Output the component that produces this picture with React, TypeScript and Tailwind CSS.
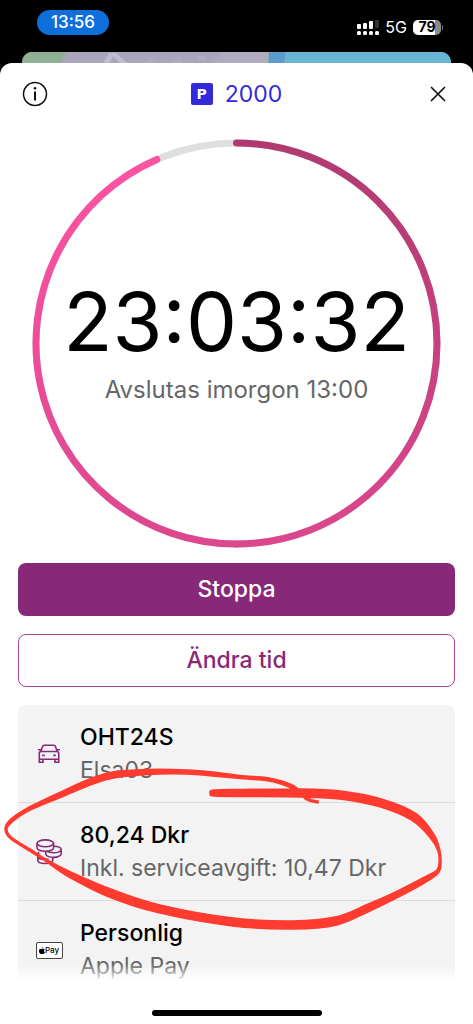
import type { ReactNode } from "react";

type Row = {
  id: string;
  title: string;
  subtitle: string;
  icon: ReactNode;
};

type InkPoint = [x: number, y: number, width: number];

const RING_RADIUS = 201;
const RING_PROGRESS = 0.935;

const INK: InkPoint[] = [
  [318, 97, 2],
  [307, 94, 2],
  [296, 84, 3],
  [283, 78, 3],
  [266, 74, 3],
  [240, 72, 3],
  [213, 69, 4],
  [187, 67, 4],
  [147, 67, 5],
  [113, 70, 6],
  [90, 77, 6],
  [60, 90, 5],
  [27, 105, 3],
  [11, 116, 3],
  [6, 124, 2],
  [11, 133, 2],
  [33, 147, 2],
  [47, 156, 2],
  [67, 168, 5],
  [110, 188, 8],
  [160, 204, 8],
  [233, 217, 8],
  [293, 220, 8],
  [336, 216, 8],
  [368, 203, 7],
  [400, 188, 6],
  [428, 173, 5],
  [438, 166, 3],
  [440, 158, 2],
  [439, 146, 2],
  [432, 131, 5],
  [414, 112, 8],
  [381, 98, 8],
  [340, 90, 8],
  [300, 88, 8],
  [240, 88, 7],
  [214, 88, 6],
  [210, 88, 3],
];

// Catmull-Rom through the points, written as cubic segments
function smooth(pts: number[][]) {
  return pts
    .slice(0, -1)
    .map((p1, i) => {
      const p0 = pts[i - 1] ?? p1;
      const p2 = pts[i + 1];
      const p3 = pts[i + 2] ?? p2;
      const c1 = [p1[0] + (p2[0] - p0[0]) / 6, p1[1] + (p2[1] - p0[1]) / 6];
      const c2 = [p2[0] - (p3[0] - p1[0]) / 6, p2[1] - (p3[1] - p1[1]) / 6];
      return `C${c1.join(" ")} ${c2.join(" ")} ${p2[0]} ${p2[1]}`;
    })
    .join("");
}

function inkPath(points: InkPoint[]) {
  const side = (dir: number) =>
    points.map(([x, y, w], i) => {
      const a = points[Math.max(i - 1, 0)];
      const b = points[Math.min(i + 1, points.length - 1)];
      const len = Math.hypot(b[0] - a[0], b[1] - a[1]);
      return [
        x + (dir * w * (a[1] - b[1])) / len / 2,
        y + (dir * w * (b[0] - a[0])) / len / 2,
      ];
    });
  const left = side(1);
  const right = side(-1).reverse();
  return `M${left[0].join(" ")}${smooth(left)}L${right[0].join(" ")}${smooth(right)}Z`;
}

function ringPoint(turn: number) {
  const a = turn * Math.PI * 2 - Math.PI / 2;
  return `${205 + RING_RADIUS * Math.cos(a)} ${205 + RING_RADIUS * Math.sin(a)}`;
}

function SignalIcon() {
  return (
    <svg width="22" height="15" viewBox="0 0 22 15" fill="#fff" aria-hidden="true">
      <rect x="0" y="4" width="4" height="5" rx="1" />
      <rect x="6" y="3" width="4" height="6" rx="1" />
      <rect x="12" y="1" width="4" height="8" rx="1" />
      <rect x="18" y="0" width="4" height="8" rx="1" fill="#333" />
      <rect x="0" y="11" width="4" height="4" rx="1.5" />
      <rect x="6" y="11" width="4" height="4" rx="1.5" />
      <rect x="12" y="11" width="4" height="4" rx="1.5" />
      <rect x="18" y="11" width="4" height="4" rx="1.5" />
    </svg>
  );
}

function CarIcon() {
  return (
    <svg width="22" height="20" viewBox="0 0 22 20" fill="none" stroke="#882978" strokeWidth="1.6" aria-hidden="true">
      <path d="M2.600 8 4.600 2.200Q4.900 1.200 6 1.200H16q1.100 0 1.400 1L19.400 8" />
      <path d="M1.300 18.200V9.300q0-1.800 1.800-1.800H18.900q1.800 0 1.800 1.800v8.900H17v-3H5v3ZM1.300 15.200H5M17 15.200h3.700M0 5.700h3M19 5.700h3" />
      <path d="M4.200 11.300h2.600M15.200 11.300h2.600" strokeWidth="1.800" />
    </svg>
  );
}

function CoinsIcon() {
  return (
    <svg width="26" height="26" viewBox="0 0 26 26" fill="none" stroke="#882978" strokeWidth="1.6" aria-hidden="true">
      <path d="M1.800 14.500v6.700c0 1.900 3.300 3.300 7.500 3.300s7.500-1.400 7.500-3.300v-2.500M1.800 17.500c0 1.600 3 2.900 7.200 2.900 1.300 0 2.600-.1 3.600-.4M1.800 15.500c0-.9.600-1.700 1.600-2.300" />
      <path d="M18 7.200c4 0 7.200 1.400 7.200 3.300s-3.400 3.300-7.600 3.300c-2.800 0-5.500-.6-7-1.600M25.200 10.500v4.300c0 1.900-3.400 3.600-7.700 3.600s-7.700-1.600-7.700-3.500v-2.500" />
      <ellipse cx="9.300" cy="4.300" rx="8.300" ry="3.400" />
      <path d="M1 4.300v4.400c0 2 3.700 3.600 8.300 3.600s8.300-1.600 8.300-3.600V4.300" />
    </svg>
  );
}

function ApplePayIcon() {
  return (
    <span className="flex h-[17px] w-[27px] items-center justify-center rounded-xs border border-[#444] bg-white text-[8px] leading-none font-medium text-black">
      <svg width="6" height="7" viewBox="0 0 12 14" aria-hidden="true">
        <path d="M8.300 0c.1 1.500-1 2.900-2.500 3C5.600 1.500 7 .2 8.300 0ZM6 4c.7 0 1.400-.7 2.700-.7 1.200 0 2.200.6 2.800 1.500-2.300 1.400-1.900 4.500.5 5.400C11.300 12 10.100 14 8.700 14c-1 0-1.400-.6-2.600-.6S4.500 14 3.600 14C1.700 14 0 10.700 0 8c0-3 1.800-4.600 3.600-4.600C4.700 3.400 5.500 4 6 4Z" />
      </svg>
      Pay
    </span>
  );
}

const ROWS: Row[] = [
  { id: "car", title: "OHT24S", subtitle: "Elsa03", icon: <CarIcon /> },
  { id: "price", title: "80,24 Dkr", subtitle: "Inkl. serviceavgift: 10,47 Dkr", icon: <CoinsIcon /> },
  { id: "payment", title: "Personlig", subtitle: "Apple Pay", icon: <ApplePayIcon /> },
];

function StatusBar() {
  return (
    <div className="flex h-[52px] items-start justify-between pt-[10px] pr-[30px] pl-[37px] text-white">
      <div className="flex h-[25px] w-[72px] items-center justify-center rounded-full bg-[#0f6fda] text-[17px] font-medium">
        13:56
      </div>
      <div className="flex h-[34px] items-center gap-[6px]">
        <SignalIcon />
        <span className="text-base">5G</span>
        <div className="flex items-center gap-px">
          <span className="flex h-[15px] w-7 items-center justify-center rounded-[5px] bg-linear-to-r from-white from-79% to-[#8a8a8a] to-79% text-sm font-bold text-black">
            79
          </span>
          <span className="h-[5px] w-px rounded-r-full bg-[#777]" />
        </div>
      </div>
    </div>
  );
}

function MapStrip() {
  return (
    <svg className="mx-auto block h-[30px] w-[calc(100%-44px)] rounded-t-[10px]" viewBox="0 0 429 30" preserveAspectRatio="none" aria-hidden="true">
      <rect width="429" height="30" fill="#aaa5bd" />
      <path d="M0 0H46Q41 4 38 12V30H0Z" fill="#8eb193" />
      <path d="M81 12 87 1H94L106 12H99L91 4 87 12Z" fill="#c0bcd6" />
      <path d="M122 12 128 5 134 12ZM146 12 158 6 162 12ZM176 4H184V9H176Z" fill="#b0abc2" />
      <path d="M200 0H257L256 12H190Z" fill="#b0abc0" />
      <path d="M245 0h2l-1 12h-2Z" fill="#a9b5a5" />
      <path d="M247 0H264L262 12H246Z" fill="#5c9ccd" />
      <path d="M264 0H429V30H262Z" fill="#67b5d3" />
    </svg>
  );
}

// The stroke darkens down the right half and brightens up the left half
function TimerRing() {
  const r = `${RING_RADIUS} ${RING_RADIUS}`;
  return (
    <svg className="block w-full" viewBox="0 0 410 410" fill="none" strokeWidth="7" strokeLinecap="round" aria-hidden="true">
      <defs>
        <linearGradient id="ring-right" gradientUnits="userSpaceOnUse" x1="0" y1="0" x2="0" y2="410">
          <stop offset="0" stopColor="#b03a70" />
          <stop offset="1" stopColor="#dc478e" />
        </linearGradient>
        <linearGradient id="ring-left" gradientUnits="userSpaceOnUse" x1="0" y1="410" x2="0" y2="0">
          <stop offset="0" stopColor="#dc478e" />
          <stop offset="1" stopColor="#ff54a4" />
        </linearGradient>
      </defs>
      <circle cx="205" cy="205" r={RING_RADIUS} stroke="#dfdfdf" />
      <path d={`M${ringPoint(0)}A${r} 0 0 1 ${ringPoint(0.5)}`} stroke="url(#ring-right)" />
      <path d={`M${ringPoint(0.5)}A${r} 0 0 1 ${ringPoint(RING_PROGRESS)}`} stroke="url(#ring-left)" />
    </svg>
  );
}

export default function App() {
  return (
    <div className="flex min-h-screen flex-col overflow-hidden bg-black font-['Inter',sans-serif]">
      <StatusBar />
      <MapStrip />

      <main className="relative -mt-[19px] flex flex-1 flex-col rounded-t-[12px] bg-white">
        <header className="flex h-[62px] items-center justify-between px-[22px]">
          <button type="button" aria-label="Information">
            <svg width="26" height="26" viewBox="0 0 26 26" fill="none" stroke="#111" strokeWidth="1.500">
              <circle cx="13" cy="13" r="11.500" />
              <path d="M13 10.500V19.500" strokeWidth="2" />
              <circle cx="13" cy="7.200" r="1.300" fill="#111" stroke="none" />
            </svg>
          </button>
          <h1 className="flex items-center gap-3 text-[23px] text-[#322bdc]">
            <span className="flex size-[22px] items-center justify-center rounded-xs bg-[#322bdc] font-['DejaVu_Sans',sans-serif] text-sm font-bold text-white">
              P
            </span>
            2000
          </h1>
          <button type="button" aria-label="Stäng" className="flex size-[26px] items-center justify-center">
            <svg width="16" height="16" viewBox="0 0 16 16" stroke="#111" strokeWidth="1.700" strokeLinecap="round">
              <path d="M1.500 1.500 14.500 14.500M14.500 1.500 1.500 14.500" />
            </svg>
          </button>
        </header>

        <section className="mx-8 mt-[14px] grid">
          <div className="col-start-1 row-start-1">
            <TimerRing />
          </div>
          <div className="col-start-1 row-start-1 flex flex-col items-center justify-center pb-2 text-center">
            <div className="text-[81px] leading-[96px] text-black">23:03:32</div>
            <p className="mt-1 text-2xl text-[#666]">Avslutas imorgon 13:00</p>
          </div>
        </section>

        <div className="mt-[15px] flex flex-col gap-[18px] px-[18px] text-[23px] font-medium">
          <button type="button" className="h-[53px] rounded-lg bg-[#872878] text-white">
            Stoppa
          </button>
          <button type="button" className="h-[53px] rounded-lg border border-[#a7459b] text-[#872878]">
            Ändra tid
          </button>
        </div>

        <section className="relative mt-[18px] px-[18px]">
          <ul className="h-[283px] overflow-hidden rounded-t-lg bg-[#f3f3f3]">
            {ROWS.map((row) => (
              <li key={row.id} className="flex h-[98px] items-center border-b border-[#dcdcdc] last:border-b-0">
                <span className="flex w-[62px] shrink-0 justify-center">{row.icon}</span>
                <div className="text-[23px] leading-[33px]">
                  <p className="font-medium text-black">{row.title}</p>
                  <p className="text-[#666]">{row.subtitle}</p>
                </div>
              </li>
            ))}
          </ul>
          <div className="absolute inset-x-0 bottom-0 h-6 bg-linear-to-b from-transparent to-white to-75%" />
          <svg className="pointer-events-none absolute top-0 left-0 w-full" viewBox="0 0 473 240" aria-hidden="true">
            <path d={inkPath(INK)} fill="#ff3b30" stroke="#ff3b30" strokeWidth="1.500" strokeLinejoin="round" />
          </svg>
        </section>

        <div className="mt-auto mb-2 h-[6px] w-[170px] self-center rounded-full bg-black" />
      </main>
    </div>
  );
}
